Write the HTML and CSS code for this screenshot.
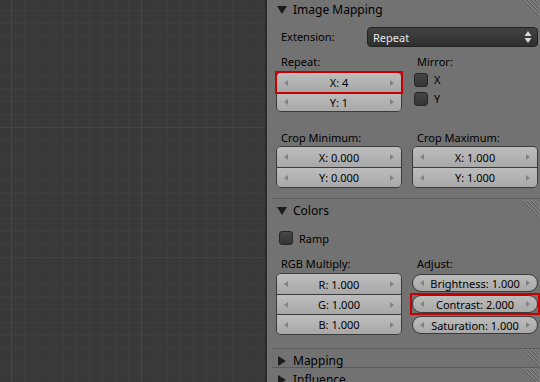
FILE: index.html
```html
<!DOCTYPE html>
<html lang="en">
<head>
    <meta charset="UTF-8">
    <title>Texture Properties</title>
    <link rel="stylesheet" href="styles.css">
</head>
<body>
    <div class="screen">
        <div class="viewport"></div>

        <div class="props">
            <!-- Image Mapping -->
            <div class="panel">
                <div class="panel-head first">
                    <svg class="tri" width="10" height="10" viewBox="0 0 10 10"><path d="M0 1 L10 1 L5 9 Z"/></svg>
                    <span>Image Mapping</span>
                    <svg class="grip" width="18" height="18" viewBox="0 0 18 18">
                        <path d="M1 0 L18 17 M5 0 L18 13 M9 0 L18 9 M13 0 L18 5" stroke="#8c8c8c"/>
                        <path d="M1 1 L17 17 M5 1 L17 13 M9 1 L17 9 M13 1 L17 5" stroke="#5a5a5a"/>
                    </svg>
                </div>
                <div class="panel-body">
                    <div class="ext-row">
                        <span class="label ext-label">Extension:</span>
                        <div class="dropdown">
                            <span>Repeat</span>
                            <svg width="8" height="14" viewBox="0 0 8 14"><path d="M4 1 L7.5 6 L0.5 6 Z M4 13 L7.5 8 L0.5 8 Z" fill="#d8d8d8"/></svg>
                        </div>
                    </div>

                    <div class="cols repeat">
                        <div class="col">
                            <div class="label">Repeat:</div>
                            <div class="numgroup">
                                <div class="mark">
                                    <div class="num small"><i class="al"></i><span>X: 4</span><i class="ar"></i></div>
                                </div>
                                <div class="num small"><i class="al"></i><span>Y: 1</span><i class="ar"></i></div>
                            </div>
                        </div>
                        <div class="col">
                            <div class="label">Mirror:</div>
                            <div class="check-row"><span class="check"></span><span>X</span></div>
                            <div class="check-row"><span class="check"></span><span>Y</span></div>
                        </div>
                    </div>

                    <div class="cols crop">
                        <div class="col">
                            <div class="label">Crop Minimum:</div>
                            <div class="numgroup">
                                <div class="num"><i class="al"></i><span>X: 0.000</span><i class="ar"></i></div>
                                <div class="num"><i class="al"></i><span>Y: 0.000</span><i class="ar"></i></div>
                            </div>
                        </div>
                        <div class="col">
                            <div class="label">Crop Maximum:</div>
                            <div class="numgroup">
                                <div class="num"><i class="al"></i><span>X: 1.000</span><i class="ar"></i></div>
                                <div class="num"><i class="al"></i><span>Y: 1.000</span><i class="ar"></i></div>
                            </div>
                        </div>
                    </div>
                </div>
            </div>

            <!-- Colors -->
            <div class="panel">
                <div class="panel-head">
                    <svg class="tri" width="10" height="10" viewBox="0 0 10 10"><path d="M0 1 L10 1 L5 9 Z"/></svg>
                    <span>Colors</span>
                    <svg class="grip" width="18" height="18" viewBox="0 0 18 18">
                        <path d="M1 0 L18 17 M5 0 L18 13 M9 0 L18 9 M13 0 L18 5" stroke="#8c8c8c"/>
                        <path d="M1 1 L17 17 M5 1 L17 13 M9 1 L17 9 M13 1 L17 5" stroke="#5a5a5a"/>
                    </svg>
                </div>
                <div class="panel-body colors">
                    <div class="check-row ramp"><span class="check"></span><span>Ramp</span></div>

                    <div class="cols rgb">
                        <div class="col">
                            <div class="label">RGB Multiply:</div>
                            <div class="numgroup">
                                <div class="num"><i class="al"></i><span>R: 1.000</span><i class="ar"></i></div>
                                <div class="num"><i class="al"></i><span>G: 1.000</span><i class="ar"></i></div>
                                <div class="num"><i class="al"></i><span>B: 1.000</span><i class="ar"></i></div>
                            </div>
                        </div>
                        <div class="col">
                            <div class="label">Adjust:</div>
                            <div class="adjust">
                                <div class="num single"><i class="al"></i><span>Brightness: 1.000</span><i class="ar"></i></div>
                                <div class="mark">
                                    <div class="num single"><i class="al"></i><span>Contrast: 2.000</span><i class="ar"></i></div>
                                </div>
                                <div class="num single"><i class="al"></i><span>Saturation: 1.000</span><i class="ar"></i></div>
                            </div>
                        </div>
                    </div>
                </div>
            </div>

            <!-- Mapping (collapsed) -->
            <div class="panel">
                <div class="panel-head closed">
                    <svg class="tri" width="10" height="10" viewBox="0 0 10 10"><path d="M1 0 L9 5 L1 10 Z"/></svg>
                    <span>Mapping</span>
                    <svg class="grip" width="18" height="18" viewBox="0 0 18 18">
                        <path d="M1 0 L18 17 M5 0 L18 13 M9 0 L18 9 M13 0 L18 5" stroke="#8c8c8c"/>
                        <path d="M1 1 L17 17 M5 1 L17 13 M9 1 L17 9 M13 1 L17 5" stroke="#5a5a5a"/>
                    </svg>
                </div>
            </div>

            <!-- Influence (collapsed, cut off by the window) -->
            <div class="panel">
                <div class="panel-head closed">
                    <svg class="tri" width="10" height="10" viewBox="0 0 10 10"><path d="M1 0 L9 5 L1 10 Z"/></svg>
                    <span>Influence</span>
                    <svg class="grip" width="18" height="18" viewBox="0 0 18 18">
                        <path d="M1 0 L18 17 M5 0 L18 13 M9 0 L18 9 M13 0 L18 5" stroke="#8c8c8c"/>
                        <path d="M1 1 L17 17 M5 1 L17 13 M9 1 L17 9 M13 1 L17 5" stroke="#5a5a5a"/>
                    </svg>
                </div>
            </div>
        </div>
    </div>
</body>
</html>
```

FILE: styles.css
```css
body {
    margin: 0;
    padding: 0;
    width: 540px;
    height: 382px;
    overflow: hidden;
    font-family: "Noto Sans", "Open Sans", sans-serif;
    font-size: 11px;
    color: #000;
}

.screen {
    display: flex;
    height: 382px;
}

/* 3D view grid */
.viewport {
    width: 265px;
    flex: none;
    border-right: 2px solid #2a2a2a;
    background-color: #393939;
    background-image:
        linear-gradient(#6e2f33, #6e2f33),
        linear-gradient(to right, #464646 1px, transparent 1px),
        linear-gradient(to bottom, #464646 1px, transparent 1px),
        linear-gradient(to right, #3e3e3e 1px, transparent 1px),
        linear-gradient(to bottom, #3e3e3e 1px, transparent 1px);
    background-size: 100% 1px, 130px 100%, 100% 130px, 13px 100%, 100% 13px;
    background-position: 0 257px, 11px 0, 0 127px, 11px 0, 0 127px;
    background-repeat: no-repeat, repeat, repeat, repeat, repeat;
}

/* properties editor */
.props {
    flex: 1;
    background-color: #727272;
    padding-left: 5px;
    overflow: hidden;
}

.panel-head {
    display: flex;
    align-items: center;
    height: 24px;
    box-sizing: border-box;
    border-top: 1px solid #5b5b5b;
    padding-left: 5px;
    font-size: 12px;
    color: #000;
}

.panel-head.first {
    margin-top: -3px;
}

.panel-head.closed {
    height: 19px;
    align-items: flex-start;
    padding-top: 3px;
}

.panel-head .tri {
    fill: #1c1c1c;
    margin-right: 6px;
}

.panel-head.closed .tri {
    margin-top: 4px;
}

.panel-head .grip {
    margin-left: auto;
    align-self: flex-start;
    margin-top: 1px;
}

.panel-head.closed .grip {
    margin-top: -3px;
}

.panel-body {
    padding: 0 2px 10px 4px;
}

.panel-body.colors {
    padding-bottom: 13px;
}

.label {
    height: 16px;
    line-height: 16px;
    padding-left: 5px;
}

.ext-row {
    display: flex;
    align-items: center;
    margin-top: 6px;
}

.ext-label {
    width: 86px;
}

.dropdown {
    flex: 1;
    height: 20px;
    box-sizing: border-box;
    display: flex;
    align-items: center;
    justify-content: space-between;
    padding: 0 5px;
    border: 1px solid #222;
    border-radius: 4px;
    background: linear-gradient(#424242, #2e2e2e);
    color: #e8e8e8;
}

.cols {
    display: grid;
    grid-template-columns: 1fr 1fr;
    column-gap: 10px;
}

.cols.repeat {
    margin-top: 7px;
}

.cols.crop {
    margin-top: 18px;
}

.numgroup {
    border: 1px solid #3a3a3a;
    border-radius: 5px;
}

.repeat .numgroup {
    margin-top: 2px;
}

.num {
    display: flex;
    align-items: center;
    justify-content: space-between;
    height: 20px;
    box-sizing: border-box;
    padding: 0 7px;
    background: linear-gradient(#bdbdbd, #a8a8a8);
}

.num.small {
    height: 19px;
}

.numgroup > :first-child,
.numgroup > :first-child .num {
    border-radius: 4px 4px 0 0;
}

.numgroup > :last-child {
    border-radius: 0 0 4px 4px;
}

.numgroup > * + * {
    border-top: 1px solid #3a3a3a;
}

.num .al,
.num .ar {
    width: 0;
    height: 0;
    border-top: 3px solid transparent;
    border-bottom: 3px solid transparent;
}

.num .al {
    border-right: 4px solid #828282;
}

.num .ar {
    border-left: 4px solid #828282;
}

/* red highlight box */
.mark {
    outline: 2px solid #c80000;
}

.numgroup > .mark {
    border-radius: 0;
}

.check-row {
    display: flex;
    align-items: center;
    gap: 6px;
    height: 19px;
    padding-left: 2px;
}

.col .check-row:first-of-type {
    margin-top: 3px;
}

.check {
    width: 14px;
    height: 14px;
    box-sizing: border-box;
    border: 1px solid #262626;
    border-radius: 3px;
    background: linear-gradient(#454545, #353535);
}

.ramp {
    margin-top: 8px;
    height: 16px;
    padding-left: 3px;
}

.cols.rgb {
    margin-top: 10px;
}

.rgb .numgroup {
    margin-top: 1px;
}

.adjust {
    display: flex;
    flex-direction: column;
    gap: 3px;
    margin-top: 2px;
}

.num.single {
    height: 18px;
    border: 1px solid #3a3a3a;
    border-radius: 9px;
}
```
